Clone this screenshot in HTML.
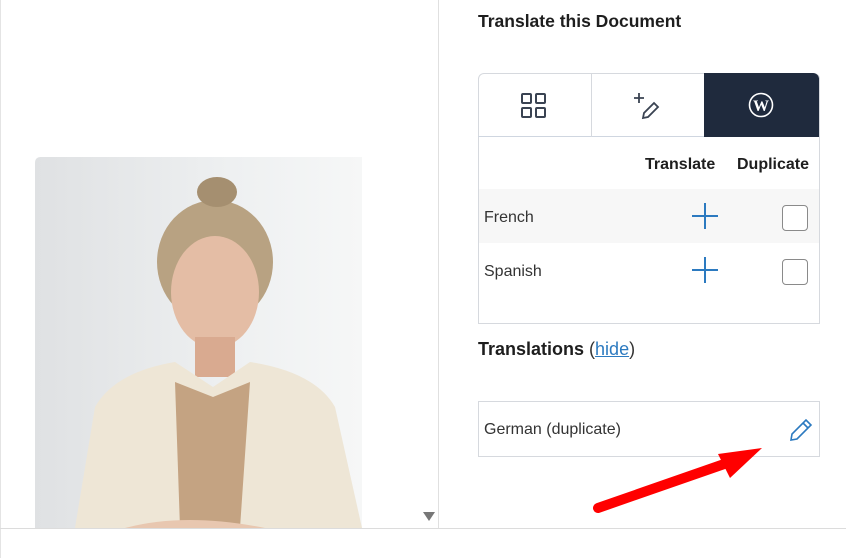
<!DOCTYPE html>
<html><head><style>
*{margin:0;padding:0;box-sizing:border-box}
body{width:846px;height:558px;background:#fff;font-family:"Liberation Sans",sans-serif;position:relative;overflow:hidden;color:#1e1e1e}
.a{position:absolute}
</style></head><body>
<div class="a" style="left:0;top:0;width:1px;height:528px;background:#e4e4e4"></div>
<div class="a" style="left:438px;top:0;width:1px;height:528px;background:#e0e0e0"></div>
<div class="a" style="left:0;top:528px;width:846px;height:1px;background:#dcdcdc"></div>
<div class="a" style="left:0;top:529px;width:1px;height:29px;background:#e4e4e4"></div>
<svg class="a" style="left:35px;top:157px" width="327" height="371" viewBox="0 0 327 371">
<defs><linearGradient id="bg" x1="0" x2="1"><stop offset="0" stop-color="#dfe1e3"/><stop offset=".6" stop-color="#eef0f1"/><stop offset="1" stop-color="#f6f7f7"/></linearGradient></defs>
<path d="M6 0H327V371H0V6Q0 0 6 0Z" fill="url(#bg)"/>
<ellipse cx="180" cy="105" rx="58" ry="62" fill="#b8a282"/>
<ellipse cx="182" cy="35" rx="20" ry="15" fill="#a58f70"/>
<ellipse cx="180" cy="135" rx="44" ry="56" fill="#e4bda5"/>
<rect x="160" y="180" width="40" height="40" fill="#d9aa90"/>
<path d="M40 371L60 250Q80 215 140 205L178 230L215 205Q280 215 300 250L327 371Z" fill="#eee6d6"/>
<path d="M140 225L178 240L215 225L205 371H145Z" fill="#c4a382"/>
<path d="M90 371Q150 355 230 371Z" fill="#e8c7b0"/>
</svg>
<svg class="a" style="left:421px;top:510px" width="16" height="12"><path d="M2 2H14L8 11Z" fill="#777"/></svg>

<div class="a" style="left:478px;top:11px;font-size:17.5px;font-weight:bold;color:#1e1e1e">Translate this Document</div>
<div class="a" style="left:478px;top:73px;width:342px;height:251px;border:1px solid #d6d9de;border-radius:6px 6px 0 0"></div>
<div class="a" style="left:478px;top:73px;width:342px;height:64px;border-bottom:1px solid #cfd6e0"></div>
<div class="a" style="left:591px;top:74px;width:1px;height:63px;background:#d6d9de"></div>
<div class="a" style="left:704px;top:73px;width:115px;height:64px;background:#1f2a3d;border-radius:0 6px 0 0"></div>
<svg class="a" style="left:521px;top:93px" width="26" height="26" viewBox="0 0 26 26" fill="none" stroke="#3a4352" stroke-width="2"><rect x="1" y="1" width="9" height="9" rx="1"/><rect x="15" y="1" width="9" height="9" rx="1"/><rect x="1" y="15" width="9" height="9" rx="1"/><rect x="15" y="15" width="9" height="9" rx="1"/></svg>
<svg class="a" style="left:633px;top:92px" width="28" height="28" viewBox="0 0 28 28" fill="none" stroke="#3a4352" stroke-width="1.8"><path d="M6 1V11M1 6H11"/><path d="M10 26L11 21L21 11L25 15L15 25Z"/></svg>
<svg class="a" style="left:748px;top:92px" width="26" height="26" viewBox="0 0 26 26"><circle cx="13" cy="13" r="11.5" fill="none" stroke="#fff" stroke-width="1.6"/><text x="13" y="19" text-anchor="middle" font-family="Liberation Serif" font-weight="bold" font-size="16" fill="#fff">W</text></svg>
<div class="a" style="left:645px;top:156px;font-size:16px;font-weight:bold">Translate</div>
<div class="a" style="left:737px;top:156px;font-size:16px;font-weight:bold">Duplicate</div>
<div class="a" style="left:479px;top:189px;width:340px;height:54px;background:#f7f7f7"></div>
<div class="a" style="left:484px;top:209px;font-size:16px;color:#333">French</div>
<div class="a" style="left:484px;top:263px;font-size:16px;color:#333">Spanish</div>
<svg class="a" style="left:692px;top:203px" width="26" height="26"><path d="M13 0V26M0 13H26" stroke="#2c7ac0" stroke-width="2"/></svg>
<svg class="a" style="left:692px;top:257px" width="26" height="26"><path d="M13 0V26M0 13H26" stroke="#2c7ac0" stroke-width="2"/></svg>
<div class="a" style="left:782px;top:205px;width:26px;height:26px;border:1.5px solid #8a8a8a;border-radius:4px;background:#fff"></div>
<div class="a" style="left:782px;top:259px;width:26px;height:26px;border:1.5px solid #8a8a8a;border-radius:4px;background:#fff"></div>

<div class="a" style="left:478px;top:339px;font-size:18px;font-weight:bold">Translations <span style="font-weight:normal;color:#333">(<span style="color:#2c7ac0;text-decoration:underline">hide</span>)</span></div>
<div class="a" style="left:478px;top:401px;width:342px;height:56px;border:1px solid #d6d9de"></div>
<div class="a" style="left:484px;top:421px;font-size:16px;color:#333">German (duplicate)</div>
<svg class="a" style="left:788px;top:417px" width="26" height="26" viewBox="0 0 26 26" fill="none" stroke="#2c7ac0" stroke-width="1.6"><path d="M3 23L4 17L18 3L23 8L9 22Z M15 6L20 11"/></svg>
<svg class="a" style="left:590px;top:440px" width="180" height="80"><path d="M8 68L140 22" stroke="#f00" stroke-width="10" stroke-linecap="round"/><path d="M128 14L172 8L140 38Z" fill="#f00"/></svg>
</body></html>
